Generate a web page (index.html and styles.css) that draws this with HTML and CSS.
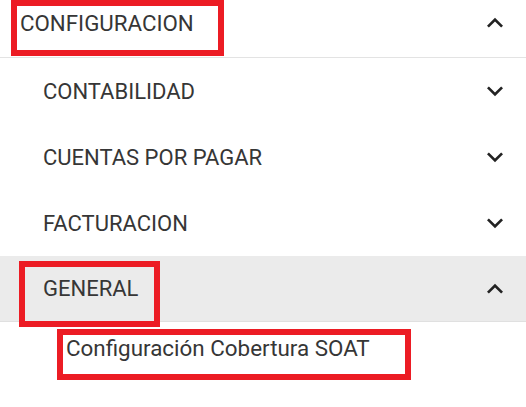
FILE: index.html
```html
<!DOCTYPE html>
<html lang="es">
<head>
  <meta charset="UTF-8">
  <meta name="viewport" content="width=device-width, initial-scale=1.0">
  <title>Configuracion</title>
  <link rel="stylesheet" href="styles.css">
</head>
<body>
  <nav class="menu">
    <div class="menu-head">
      <span class="label">CONFIGURACION</span>
      <svg class="chevron" viewBox="0 0 24 24"><path d="M12 8l-6 6 1.41 1.41L12 10.83l4.59 4.58L18 14z"/></svg>
      <div class="mark mark-head"></div>
    </div>

    <div class="menu-item">
      <span class="label">CONTABILIDAD</span>
      <svg class="chevron" viewBox="0 0 24 24"><path d="M16.59 8.59L12 13.17 7.41 8.59 6 10l6 6 6-6z"/></svg>
    </div>
    <div class="menu-item">
      <span class="label">CUENTAS POR PAGAR</span>
      <svg class="chevron" viewBox="0 0 24 24"><path d="M16.59 8.59L12 13.17 7.41 8.59 6 10l6 6 6-6z"/></svg>
    </div>
    <div class="menu-item">
      <span class="label">FACTURACION</span>
      <svg class="chevron" viewBox="0 0 24 24"><path d="M16.59 8.59L12 13.17 7.41 8.59 6 10l6 6 6-6z"/></svg>
    </div>
    <div class="menu-item open">
      <span class="label">GENERAL</span>
      <svg class="chevron" viewBox="0 0 24 24"><path d="M12 8l-6 6 1.41 1.41L12 10.83l4.59 4.58L18 14z"/></svg>
      <div class="mark mark-general"></div>
    </div>

    <div class="sub-item">
      <a href="#">Configuración Cobertura SOAT</a>
      <div class="mark mark-sub"></div>
    </div>
  </nav>
</body>
</html>
```

FILE: styles.css
```css
body {
  margin: 0;
  font-family: Roboto, 'Liberation Sans', sans-serif;
  background: #fff;
  color: #363636;
}

.menu {
  width: 526px;
}

.menu-head {
  position: relative;
  height: 57px;
  box-sizing: border-box;
  display: flex;
  align-items: center;
  justify-content: space-between;
  padding: 0 15px 11px 20px;
  font-size: 22.3px;
}

/* separator under the head, drawn apart so the padding doesn't move it */
.menu-head::after {
  content: "";
  position: absolute;
  left: 0;
  right: 0;
  bottom: -1px;
  height: 1px;
  background: #e3e3e3;
}

.menu-head + .menu-item {
  margin-top: 1px;
}

.menu-item {
  position: relative;
  height: 66px;
  display: flex;
  align-items: center;
  justify-content: space-between;
  padding: 0 15px 0 43px;
  font-size: 22px;
}

.menu-item.open {
  background: #ebebeb;
  border-bottom: 1px solid #e0e0e0;
  height: 65px;
}

.chevron {
  width: 32px;
  height: 32px;
  fill: #222;
}

.sub-item {
  position: relative;
  height: 84px;
  padding: 13px 0 0 66px;
  box-sizing: border-box;
  font-size: 22.4px;
}

.sub-item a {
  color: #363636;
  text-decoration: none;
}

/* red annotation boxes */
.mark {
  position: absolute;
  border: 6px solid #ec1c24;
  box-sizing: border-box;
  pointer-events: none;
}

.mark-head {
  left: 11px;
  top: 0;
  width: 213px;
  height: 56px;
}

.mark-general {
  left: 19px;
  top: 5px;
  width: 141px;
  height: 66px;
}

.mark-sub {
  left: 57px;
  top: 7px;
  width: 354px;
  height: 51px;
}
```
